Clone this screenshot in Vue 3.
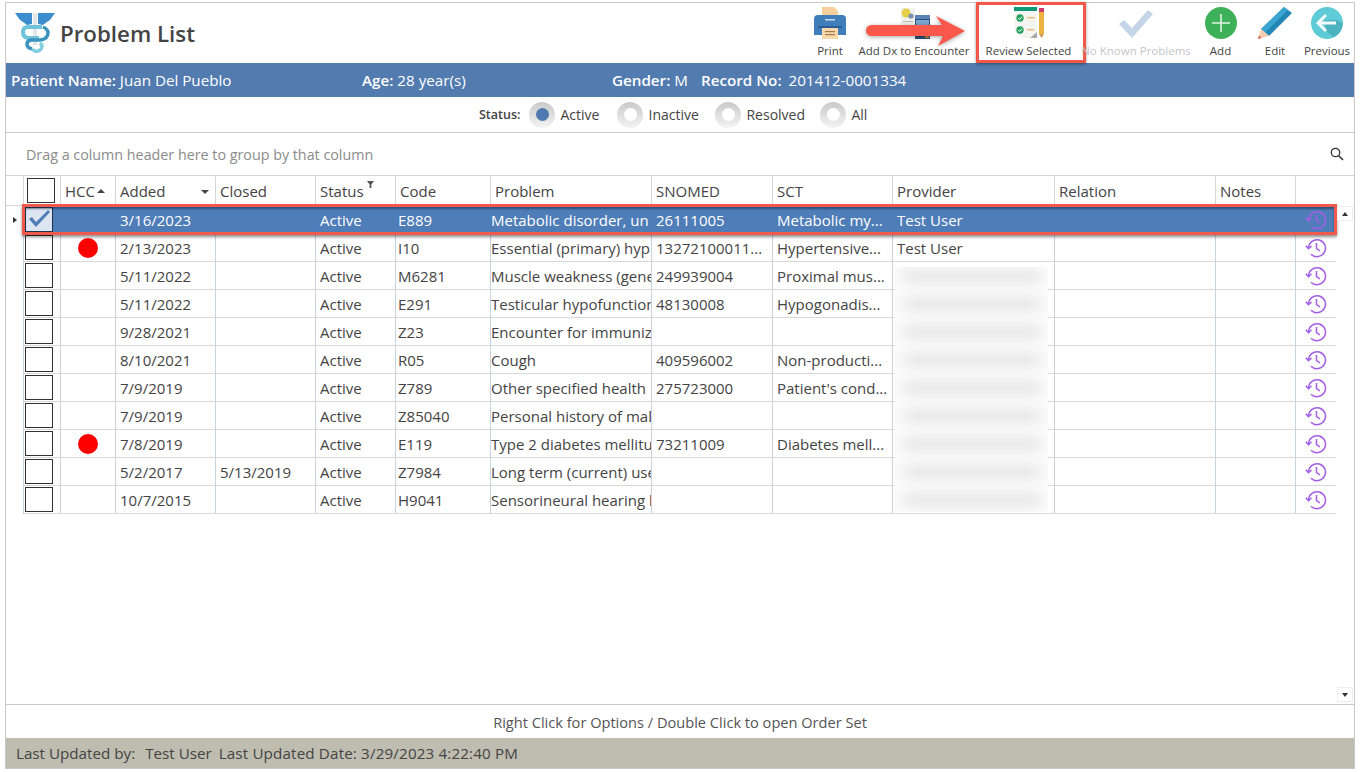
<script setup>
const cols = ['HCC', 'Added', 'Closed', 'Status', 'Code', 'Problem', 'SNOMED', 'SCT', 'Provider', 'Relation', 'Notes']
const rows = [
  { hcc: false, added: '3/16/2023', closed: '', code: 'E889', problem: 'Metabolic disorder, un', snomed: '26111005', sct: 'Metabolic my...', provider: 'Test User', sel: true },
  { hcc: true, added: '2/13/2023', closed: '', code: 'I10', problem: 'Essential (primary) hyp', snomed: '13272100011...', sct: 'Hypertensive...', provider: 'Test User' },
  { hcc: false, added: '5/11/2022', closed: '', code: 'M6281', problem: 'Muscle weakness (gene', snomed: '249939004', sct: 'Proximal mus...', provider: '' },
  { hcc: false, added: '5/11/2022', closed: '', code: 'E291', problem: 'Testicular hypofunction', snomed: '48130008', sct: 'Hypogonadis...', provider: '' },
  { hcc: false, added: '9/28/2021', closed: '', code: 'Z23', problem: 'Encounter for immuniz', snomed: '', sct: '', provider: '' },
  { hcc: false, added: '8/10/2021', closed: '', code: 'R05', problem: 'Cough', snomed: '409596002', sct: 'Non-producti...', provider: '' },
  { hcc: false, added: '7/9/2019', closed: '', code: 'Z789', problem: 'Other specified health', snomed: '275723000', sct: "Patient's cond...", provider: '' },
  { hcc: false, added: '7/9/2019', closed: '', code: 'Z85040', problem: 'Personal history of mal', snomed: '', sct: '', provider: '' },
  { hcc: true, added: '7/8/2019', closed: '', code: 'E119', problem: 'Type 2 diabetes mellitu', snomed: '73211009', sct: 'Diabetes mell...', provider: '' },
  { hcc: false, added: '5/2/2017', closed: '5/13/2019', code: 'Z7984', problem: 'Long term (current) use', snomed: '', sct: '', provider: '' },
  { hcc: false, added: '10/7/2015', closed: '', code: 'H9041', problem: 'Sensorineural hearing l', snomed: '', sct: '', provider: '' },
]
const statuses = [
  { label: 'Active', on: true },
  { label: 'Inactive' },
  { label: 'Resolved' },
  { label: 'All' },
]
</script>

<template>
  <div class="frame">
    <header class="top">
      <div class="brand">
        <svg class="logo" width="40" height="40" viewBox="0 0 40 40">
          <path d="M0 0 H17 V11 L12 12 Q7 8 5 7 Z" fill="#3c8dce" />
          <path d="M40 0 H23 V11 L28 12 Q33 8 35 7 Z" fill="#3c8dce" />
          <rect x="18" y="0" width="4" height="32" fill="#e2e6e9" />
          <path d="M27 14 H13 Q8 14 8 19 Q8 25 14 25 H24" fill="none" stroke="#6fc4d9" stroke-width="4" />
          <path d="M28 14 Q33 16 33 20 Q33 26 25 27 H16 Q12 28 12 31 Q12 35 17 36" fill="none" stroke="#3a94bf" stroke-width="3.5" />
          <path d="M17 36 Q21 40 25 37 Q29 33 25 30" fill="none" stroke="#82cfde" stroke-width="3.5" />
        </svg>
        <h1>Problem List</h1>
      </div>
      <div class="tools">
        <button class="tool t-print">
          <svg width="32" height="32" viewBox="0 0 32 32">
            <path d="M8 0 H20 L24 4 V12 H8 Z" fill="#f6cf9d" />
            <path d="M0 12 Q0 8 4 8 H28 Q32 8 32 12 V28 H0 Z" fill="#3f7dbb" />
            <rect x="4" y="19" width="24" height="2" fill="#2b5f94" />
            <rect x="11" y="12" width="10" height="1.5" fill="#c9dded" />
            <rect x="8" y="21" width="16" height="11" fill="#f9d9ac" />
            <rect x="11" y="24" width="10" height="1.2" fill="#a07a4a" />
            <rect x="11" y="27" width="10" height="1.2" fill="#a07a4a" />
          </svg>
          <span>Print</span>
        </button>
        <button class="tool t-dx">
          <svg width="29" height="31" viewBox="0 0 29 31">
            <rect x="0" y="0" width="14" height="17" fill="#f1f1ee" />
            <circle cx="5" cy="5" r="4.5" fill="#e6cf48" />
            <circle cx="10" cy="8" r="2.6" fill="#7c8fb0" />
            <rect x="2" y="13" width="10" height="1" fill="#b8b8b8" />
            <rect x="14" y="7" width="15" height="24" fill="#2c4f78" />
            <rect x="14" y="7" width="15" height="4" fill="#5b83b8" />
            <rect x="15" y="12" width="13" height="5" fill="#7aa6cf" />
            <rect x="24" y="27" width="4" height="3" fill="#b98a3a" />
          </svg>
          <span>Add Dx to Encounter</span>
        </button>
        <button class="tool t-review">
          <svg width="30" height="32" viewBox="0 0 30 32">
            <path d="M0 4 H23 V31 H8 L1 25 Z" fill="#f4f4f0" />
            <rect x="0" y="0" width="23" height="4" fill="#0f9a76" />
            <path d="M23 25 V31 H16 Z" fill="#a7a9ab" />
            <circle cx="6" cy="11" r="3.7" fill="#27a35f" />
            <path d="M4.2 11 L5.6 12.5 L8 9.7" fill="none" stroke="#fff" stroke-width="1" />
            <rect x="13" y="10" width="8" height="1.4" fill="#f0b878" />
            <circle cx="6" cy="23" r="3.7" fill="#27a35f" />
            <path d="M4.2 23 L5.6 24.5 L8 21.7" fill="none" stroke="#fff" stroke-width="1" />
            <rect x="13" y="22" width="7" height="1.4" fill="#f0b878" />
            <rect x="25" y="1" width="5" height="4" fill="#d2396a" />
            <rect x="25" y="5" width="5" height="22" fill="#edb23f" />
            <path d="M25 27 H30 L27.5 31 Z" fill="#c89a5a" />
          </svg>
          <span>Review Selected</span>
        </button>
        <button class="tool t-nkp">
          <svg width="34" height="28" viewBox="0 0 34 28">
            <path d="M0 14 L5 10 L13 18 L29 0 L34 4 L13 28 Z" fill="#c5d5e8" />
          </svg>
          <span>No Known Problems</span>
        </button>
        <button class="tool t-add">
          <svg width="32" height="32" viewBox="0 0 32 32">
            <circle cx="16" cy="16" r="16" fill="#3fb05a" />
            <path d="M16 7 V25 M7 16 H25" stroke="#dff3e3" stroke-width="1.6" />
          </svg>
          <span>Add</span>
        </button>
        <button class="tool t-edit">
          <svg width="34" height="32" viewBox="0 0 34 32">
            <path d="M26 0 L34 6 L11 29 L3 22 Z" fill="#2488b6" />
            <path d="M26 0 L30 3 L7 25.5 L3 22 Z" fill="#3ba6d2" />
            <path d="M3 22 L11 29 L0 32 Z" fill="#f4cdb0" />
            <path d="M0 32 L1 28.5 L3.5 31 Z" fill="#d8604f" />
          </svg>
          <span>Edit</span>
        </button>
        <button class="tool t-prev">
          <svg width="32" height="32" viewBox="0 0 32 32">
            <circle cx="16" cy="16" r="16" fill="#5fcbd6" />
            <path d="M15 24 L23 30 Q30 26 32 17 L26 13 H14 Z" fill="#47acb8" opacity=".8" />
            <path d="M15 8 L7 16 L15 24 M7 16 H25" fill="none" stroke="#f3fbfc" stroke-width="3" />
          </svg>
          <span>Previous</span>
        </button>
        <svg class="arrow-mark" width="100" height="30" viewBox="0 0 100 30">
          <path d="M5.5 9 H76 L70 0 L99 15 L72 30 L77 20 H5.5 A5.5 5.5 0 0 1 5.5 9 Z" fill="#f9584a" />
        </svg>
      </div>
    </header>

    <section class="patient">
      <div class="p-name"><b>Patient Name:</b> Juan Del Pueblo</div>
      <div class="p-age"><b>Age:</b> 28 year(s)</div>
      <div class="p-gender"><b>Gender:</b> M</div>
      <div class="p-rec"><b>Record No:</b> 201412-0001334</div>
    </section>

    <section class="status">
      <b>Status:</b>
      <label v-for="s in statuses" :key="s.label" class="radio">
        <span class="knob" :class="{ on: s.on }"></span>{{ s.label }}
      </label>
    </section>

    <section class="grid">
      <div class="group">
        <span>Drag a column header here to group by that column</span>
        <svg width="14" height="14" viewBox="0 0 14 14">
          <circle cx="5.5" cy="5.5" r="4.2" fill="none" stroke="#333" stroke-width="1.3" />
          <path d="M8.7 8.7 L13 13" stroke="#333" stroke-width="1.5" />
        </svg>
      </div>

      <div class="row head">
        <div class="ind"></div>
        <div class="cell c-check"><span class="box"></span></div>
        <div v-for="c in cols" :key="c" class="cell">
          {{ c }}
          <i v-if="c === 'HCC'" class="sort up"></i>
          <i v-if="c === 'Added'" class="sort down"></i>
          <svg v-if="c === 'Status'" class="funnel" width="7" height="7" viewBox="0 0 8 8"><path d="M0 0 H8 L5 4 V8 H3 V4 Z" fill="#555" /></svg>
        </div>
        <div class="cell c-hist"></div>
      </div>

      <div class="body">
        <div v-for="(r, i) in rows" :key="i" class="row" :class="{ sel: r.sel }">
          <div class="ind"><i v-if="r.sel"></i></div>
          <div class="cell c-check">
            <span class="box" :class="{ checked: r.sel }">
              <svg v-if="r.sel" width="24" height="20" viewBox="0 0 24 20"><path d="M2 10 L5 8 L9 13 L21 1 L23 3 L9 18 Z" fill="#4f7db5" /></svg>
            </span>
          </div>
          <div class="cell hcc"><span v-if="r.hcc" class="dot"></span></div>
          <div class="cell">{{ r.added }}</div>
          <div class="cell">{{ r.closed }}</div>
          <div class="cell">Active</div>
          <div class="cell c-code">{{ r.code }}</div>
          <div class="cell c-prob">{{ r.problem }}</div>
          <div class="cell">{{ r.snomed }}</div>
          <div class="cell">{{ r.sct }}</div>
          <div class="cell">{{ r.provider }}</div>
          <div class="cell"></div>
          <div class="cell"></div>
          <div class="cell c-hist">
            <svg width="22" height="22" viewBox="0 0 22 22" fill="none" stroke="#a45ee5" stroke-width="1.5">
              <path d="M3.5 11 A8.5 8.5 0 1 1 6 17.2" />
              <path d="M0.8 8.8 L3.5 11.8 L6.5 9" />
              <path d="M11.5 6 V11.5 L15 14" />
            </svg>
          </div>
        </div>

        <div class="blur" aria-hidden="true">
          <i v-for="n in 9" :key="n"></i>
        </div>
        <div class="mark-row"></div>
      </div>

      <div class="scroll">
        <span class="arrow up"></span>
        <span class="arrow down"></span>
      </div>
    </section>

    <div class="hint">Right Click for Options / Double Click to open Order Set</div>
    <footer class="foot">
      <span>Last Updated by:</span><span>Test User</span><span class="stamp">Last Updated Date: 3/29/2023 4:22:40 PM</span>
    </footer>
  </div>
</template>

<style>
html, body { margin: 0; background: #fff; }
</style>

<style scoped>
* { box-sizing: border-box; }
.frame {
  width: 1350px;
  height: 767px;
  margin: 2px 0 0 5px;
  border: 1px solid #c8c8c8;
  display: flex;
  flex-direction: column;
  font-family: "Open Sans", "Noto Sans", sans-serif;
  font-size: 14px;
  color: #444;
  background: #fff;
}
.top { height: 60px; display: flex; justify-content: space-between; flex: none; }
.brand { display: flex; align-items: flex-start; padding: 10px 0 0 9px; }
.logo { flex: none; }
h1 { margin: 4px 0 0 5px; font-size: 22.3px; line-height: 34px; font-weight: 600; color: #444; }
.tools { display: flex; position: relative; }
.tool {
  border: 0; background: none; padding: 0; font: inherit; font-size: 11.5px; color: #444;
  display: flex; flex-direction: column; align-items: center; justify-content: space-between;
  height: 55px; white-space: nowrap;
}
.tool svg { flex: none; margin-top: 4px; }
.t-print { width: 48px; margin-right: 2px; padding-left: 2px; }
.t-dx { width: 118px; margin-right: 3px; }
.t-dx svg { margin-top: 5px; margin-left: 3px; }
.t-review {
  width: 110px; height: 61px; margin-top: -1px; border: 3px solid #f0584a; box-shadow: 0 1px 3px rgba(0,0,0,.4);
  padding: 0 5px 2px 0;
}
.t-review svg { margin-top: 2px; }
.t-nkp { width: 112px; color: #c4c6c8; margin-left: -6px; }
.t-nkp svg { margin-top: 7px; }
.t-add { width: 56px; padding-left: 1px; }
.t-edit { width: 52px; padding-left: 2px; }
.t-prev { width: 54px; }
.arrow-mark {
  position: absolute; right: 388px; top: 13px;
  filter: drop-shadow(0 1px 2px rgba(0,0,0,.35));
}
.patient {
  height: 34px; flex: none; background: #527bb0; color: #fff; display: flex; align-items: center; padding-left: 5px; font-size: 15.2px;
}
.patient b { font-weight: 600; }
.p-name { width: 351px; }
.p-age { width: 250px; }
.p-gender { width: 89px; }
.p-rec b { margin-right: 3px; }
.status {
  height: 35px; flex: none; display: flex; align-items: center; padding-left: 473px; font-size: 14px;
}
.status b { font-weight: 600; font-size: 12.5px; margin-right: 9px; }
.radio { display: flex; align-items: center; flex: none; }
.radio:nth-child(2) { width: 88px; }
.radio:nth-child(3) { width: 98px; }
.radio:nth-child(4) { width: 105px; }
.knob {
  width: 26px; height: 26px; border-radius: 50%; margin-right: 5px; position: relative; flex: none;
  background: linear-gradient(#c9c9c9, #f4f4f4);
}
.knob::after {
  content: ""; position: absolute; left: 6.5px; top: 6.5px; width: 13px; height: 13px; border-radius: 50%; background: #fff;
}
.knob.on::after { background: #5079b0; }
.grid { position: relative; height: 573px; flex: none; border-top: 1px solid #c8c8c8; border-bottom: 1px solid #c8c8c8; }
.group {
  height: 43px; display: flex; justify-content: space-between; align-items: center; padding: 0 10px 0 20px; color: #8b8b8b;
  border-bottom: 1px solid #d5d5d5; font-size: 14.3px;
}
.row {
  display: grid;
  grid-template-columns: 17px 37px 55px 100px 100px 80px 95px 161px 121px 120px 162px 161px 80px 41px;
  height: 28px;
  width: 1330px;
  font-size: 15px;
}
.head { height: 30px; border-bottom: 1px solid #d5d5d5; }
.cell {
  border-left: 1px solid #c8d3e0; border-bottom: 1px solid #d9d9d9; padding: 0 4px; line-height: 28px;
  white-space: nowrap; overflow: hidden; min-width: 0; position: relative;
}
.c-code { padding-left: 2px; }
.c-prob { padding: 0; }
.head .cell { border-left-color: #d5d5d5; border-bottom: 0; line-height: 30px; }
.c-check { padding: 0 0 0 1px; display: flex; align-items: center; }
.head .c-check { padding-left: 3px; }
.box { width: 28px; height: 25px; border: 1px solid #333; background: #fff; display: block; flex: none; }
.box.checked { background: #dde5f0; border-color: #1f3250; }
.box svg { display: block; margin: 1px 0 0 1px; }
.sort { position: absolute; width: 0; height: 0; border-left: 4px solid transparent; border-right: 4px solid transparent; }
.sort.up { border-bottom: 4px solid #444; left: 36px; top: 13px; }
.sort.down { border-top: 4px solid #444; left: 85px; top: 14px; }
.funnel { position: absolute; left: 51px; top: 5px; }
.ind { position: relative; background: #fff; }
.ind i { position: absolute; left: 7px; top: 11px; border-left: 4px solid #333; border-top: 3px solid transparent; border-bottom: 3px solid transparent; }
.hcc { display: flex; align-items: center; justify-content: center; }
.dot { width: 20px; height: 20px; border-radius: 50%; background: #f00; }
.c-hist { padding: 0; display: flex; align-items: center; justify-content: center; border-bottom: 1px solid #d9d9d9; }
.c-hist svg { display: block; }
.sel { background: #4f7db8; color: #fff; }
.sel .cell { border-left-color: #4f7db8; border-bottom-color: #4f7db8; }
.body { position: relative; }
.mark-row {
  position: absolute; left: 16px; top: -2px; width: 1315px; height: 31px; border: 3px solid #ef5a4d;
  box-shadow: 0 2px 3px rgba(0,0,0,.45), inset 0 2px 2px rgba(20,40,70,.55);
  pointer-events: none;
}
.blur {
  position: absolute; left: 889px; top: 61px; width: 153px; height: 245px; background: #fbfbfb;
  display: flex; flex-direction: column; gap: 14px; padding: 2px 8px 0; overflow: hidden;
}
.blur i { display: block; height: 14px; flex: none; background: #e8e8e8; filter: blur(6px); }
.scroll { position: absolute; right: 1px; top: 73px; bottom: 2px; width: 16px; }
.arrow { position: absolute; left: 0; width: 16px; height: 15px; background: #fff; border: 1px solid #eee; }
.arrow::after { content: ""; position: absolute; left: 4px; border-left: 3px solid transparent; border-right: 3px solid transparent; }
.arrow.up { top: 0; }
.arrow.up::after { top: 5px; border-bottom: 4px solid #333; }
.arrow.down { bottom: 0; }
.arrow.down::after { top: 5px; border-top: 4px solid #333; }
.hint { height: 33px; flex: none; text-align: center; line-height: 35px; color: #555; font-size: 14.6px; }
.foot {
  height: 30px; flex: none; background: #bfbcb0; display: flex; align-items: center; padding-left: 10px; color: #444; gap: 10px; font-size: 15.2px;
}
.stamp { margin-left: -3px; letter-spacing: .15px; }
</style>
